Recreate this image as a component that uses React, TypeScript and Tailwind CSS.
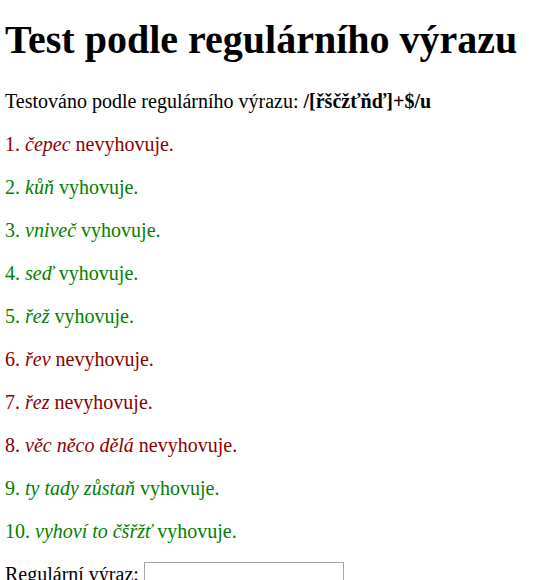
import React from "react";

const items: { n: number; word: string; ok: boolean }[] = [
  { n: 1, word: "čepec", ok: false },
  { n: 2, word: "kůň", ok: true },
  { n: 3, word: "vniveč", ok: true },
  { n: 4, word: "seď", ok: true },
  { n: 5, word: "řež", ok: true },
  { n: 6, word: "řev", ok: false },
  { n: 7, word: "řez", ok: false },
  { n: 8, word: "věc něco dělá", ok: false },
  { n: 9, word: "ty tady zůstaň", ok: true },
  { n: 10, word: "vyhoví to čšřžť", ok: true },
];

export default function App() {
  return (
    <div
      className="min-h-[580px] bg-white pl-[5px] pt-[17px] text-black"
      style={{ fontFamily: '"Liberation Serif", "Times New Roman", serif' }}
    >
      <h1 className="mb-[27px] text-[40px] font-bold leading-[46px]">
        Test podle regulárního výrazu
      </h1>
      <p className="mb-[20px] text-[20px] leading-[23px]">
        Testováno podle regulárního výrazu: <b>/[řščžťňď]+$/u</b>
      </p>
      {items.map((it) => (
        <p
          key={it.n}
          className={
            "mb-[20px] text-[20px] leading-[23px] " +
            (it.ok ? "text-[#008000]" : "text-[#8b0000]")
          }
        >
          {it.n}. <i>{it.word}</i> {it.ok ? "vyhovuje." : "nevyhovuje."}
        </p>
      ))}
      <form className="flex items-start text-[20px] leading-[23px]">
        <label className="whitespace-pre">Regulární výraz: </label>
        <input
          type="text"
          className="mt-[-1px] h-[27px] w-[200px] border border-[#a6a6a6] bg-white"
        />
      </form>
    </div>
  );
}
